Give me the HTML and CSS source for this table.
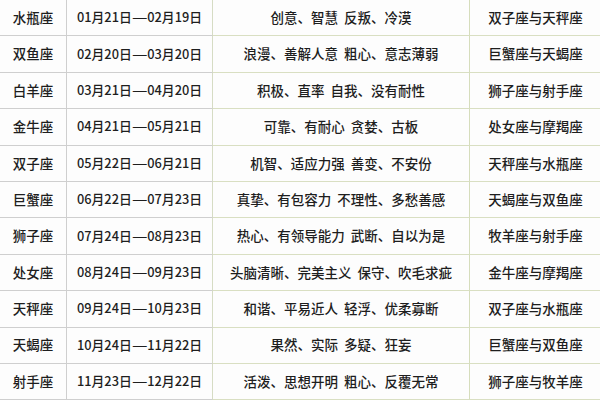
FILE: index.html
```html
<!DOCTYPE html>
<html lang="zh-CN">
<head>
<meta charset="utf-8">
<title>星座表</title>
<link rel="stylesheet" href="styles.css">
</head>
<body>
<div class="table">
  <div class="c name">水瓶座</div><div class="c date">01月21日<span class="dash">—</span>02月19日</div><div class="c trait">创意、智慧 反叛、冷漠</div><div class="c match">双子座与天秤座</div>
  <div class="c name">双鱼座</div><div class="c date">02月20日<span class="dash">—</span>03月20日</div><div class="c trait">浪漫、善解人意 粗心、意志薄弱</div><div class="c match">巨蟹座与天蝎座</div>
  <div class="c name">白羊座</div><div class="c date">03月21日<span class="dash">—</span>04月20日</div><div class="c trait">积极、直率 自我、没有耐性</div><div class="c match">狮子座与射手座</div>
  <div class="c name">金牛座</div><div class="c date">04月21日<span class="dash">—</span>05月21日</div><div class="c trait">可靠、有耐心 贪婪、古板</div><div class="c match">处女座与摩羯座</div>
  <div class="c name">双子座</div><div class="c date">05月22日<span class="dash">—</span>06月21日</div><div class="c trait">机智、适应力强 善变、不安份</div><div class="c match">天秤座与水瓶座</div>
  <div class="c name">巨蟹座</div><div class="c date">06月22日<span class="dash">—</span>07月23日</div><div class="c trait">真挚、有包容力 不理性、多愁善感</div><div class="c match">天蝎座与双鱼座</div>
  <div class="c name">狮子座</div><div class="c date">07月24日<span class="dash">—</span>08月23日</div><div class="c trait">热心、有领导能力 武断、自以为是</div><div class="c match">牧羊座与射手座</div>
  <div class="c name">处女座</div><div class="c date">08月24日<span class="dash">—</span>09月23日</div><div class="c trait">头脑清晰、完美主义 保守、吹毛求疵</div><div class="c match">金牛座与摩羯座</div>
  <div class="c name">天秤座</div><div class="c date">09月24日<span class="dash">—</span>10月23日</div><div class="c trait">和谐、平易近人 轻浮、优柔寡断</div><div class="c match">双子座与水瓶座</div>
  <div class="c name">天蝎座</div><div class="c date">10月24日<span class="dash">—</span>11月22日</div><div class="c trait">果然、实际 多疑、狂妄</div><div class="c match">巨蟹座与双鱼座</div>
  <div class="c name">射手座</div><div class="c date">11月23日<span class="dash">—</span>12月22日</div><div class="c trait">活泼、思想开明 粗心、反覆无常</div><div class="c match">狮子座与牧羊座</div>
</div>
</body>
</html>
```
FILE: styles.css
```css
html, body {
  margin: 0;
  padding: 0;
  background: #ffffff;
}
body {
  width: 600px;
  height: 400px;
  overflow: hidden;
  font-family: "Noto Sans CJK SC", "Noto Sans", sans-serif;
  font-size: 13.5px;
  font-weight: 500;
  color: #1e1e1e;
}
.table {
  display: grid;
  grid-template-columns: 67px 146px 257px 132px;
  grid-auto-rows: 36.4px;
}
.c {
  display: flex;
  align-items: center;
  justify-content: center;
  white-space: nowrap;
  border-bottom: 1px solid #cfcfcf;
  border-right: 1px solid #cfcfcf;
  background: #fdfdfd;
  line-height: 1;
}
.date {
  font-size: 12.8px;
  border-right-color: #d6dcc4;
}
.dash {
  display: inline-block;
  transform: scaleX(1.35);
  margin: 0 2px;
}
.trait {
  word-spacing: 3px;
  border-bottom-color: #d9dfc2;
  border-right-color: #d6ddbc;
}
.match {
  border-bottom-color: #d9dfc2;
  border-right-color: #d6ddbc;
}
```
